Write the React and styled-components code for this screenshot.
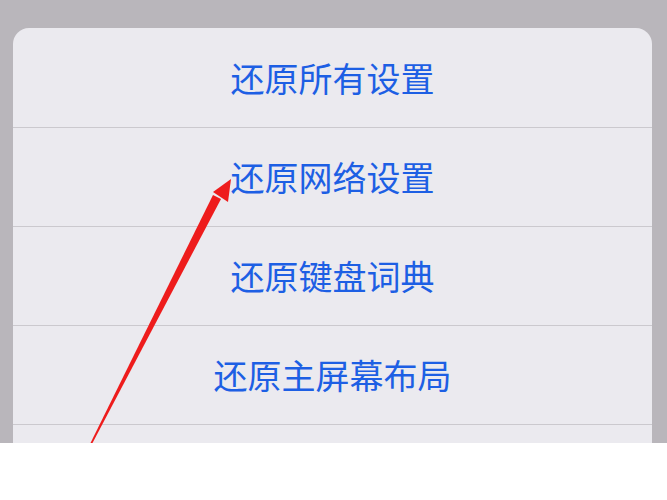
import React from "react";
import styled, { createGlobalStyle } from "styled-components";

const Global = createGlobalStyle`
  html, body { margin: 0; padding: 0; background: #ffffff; }
  #root { width: 667px; height: 500px; overflow: hidden; }
`;

const Page = styled.div`
  position: relative;
  width: 667px;
  height: 500px;
  display: flex;
  flex-direction: column;
  background: #ffffff;
  font-family: "Noto Sans CJK SC", "Noto Sans", sans-serif;
`;

const Backdrop = styled.div`
  height: 443px;
  background: #b9b6bb;
  padding: 28px 15px 0 13px;
  box-sizing: border-box;
  overflow: hidden;
  display: flex;
  flex-direction: column;
`;

const Sheet = styled.div`
  flex: 1;
  background: #ebeaef;
  border-radius: 16px 16px 0 0;
  display: flex;
  flex-direction: column;
`;

const Row = styled.div`
  height: 98px;
  flex: none;
  display: flex;
  align-items: center;
  justify-content: center;
  border-bottom: 1px solid #cbc9ce;
  color: #1d5fe4;
  font-size: 34px;
  line-height: 1;
  font-weight: 400;
  &:first-child { height: 99px; }
`;

const Footer = styled.div`
  flex: 1;
  background: #ffffff;
`;

const Arrow = styled.svg`
  position: absolute;
  left: 0;
  top: 0;
  pointer-events: none;
`;

const items = ["还原所有设置", "还原网络设置", "还原键盘词典", "还原主屏幕布局"];

export default function App() {
  return (
    <>
      <Global />
      <Page>
        <Backdrop>
          <Sheet>
            {items.map((t) => (
              <Row key={t}>{t}</Row>
            ))}
          </Sheet>
        </Backdrop>
        <Footer />
        <Arrow width="667" height="500" viewBox="0 0 667 500">
          <polygon
            points="90.5,443 213,195 221,199 92.5,443"
            fill="#ee1c1c"
          />
          <polygon points="231,179 213,192 228,202" fill="#ee1c1c" />
        </Arrow>
      </Page>
    </>
  );
}
